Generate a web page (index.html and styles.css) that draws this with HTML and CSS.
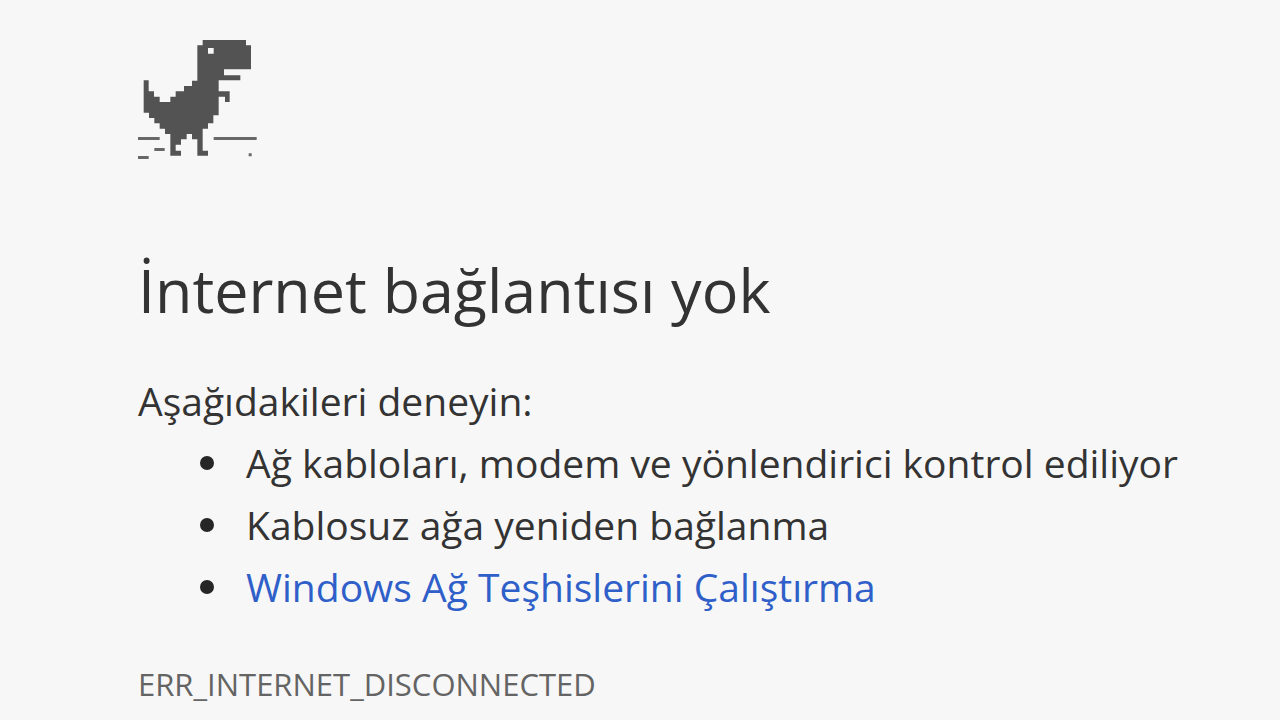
FILE: index.html
```html
<!DOCTYPE html>
<html lang="tr">
<head>
<meta charset="utf-8">
<meta name="viewport" content="width=device-width, initial-scale=1">
<title>İnternet bağlantısı yok</title>
<link rel="stylesheet" href="styles.css">
</head>
<body>
<main class="page">
<svg class="dino" viewBox="24 30 360 360" aria-hidden="true">
<path class="dino-body" fill-rule="evenodd" d="M218 30H348V46H363V118H282V136H331V151H266V184H299V216H285V200H266V256H250V280H234V296H218V362H234V377H202V328H186V312H170V328H153V344H137V362H153V377H121V312H105V296H89V280H73V264H57V248H41V151H56V184H72V200H89V216H121V200H137V184H162V168H186V152H202V46H218ZM234 54V71H251V54Z"/>
<path class="dino-ground" d="M24 321H89V330H24ZM73 354H104V363H73ZM24 378H56V387H24ZM251 321H380V330H251ZM356 370H365V379H356Z"/>
</svg>
<h1 class="title">İnternet bağlantısı yok</h1>
<p class="intro">Aşağıdakileri deneyin:</p>
<ul class="tips">
<li class="tip">Ağ kabloları, modem ve yönlendirici kontrol ediliyor</li>
<li class="tip">Kablosuz ağa yeniden bağlanma</li>
<li class="tip"><a class="link" href="#">Windows Ağ Teşhislerini Çalıştırma</a></li>
</ul>
<p class="code">ERR_INTERNET_DISCONNECTED</p>
</main>
</body>
</html>
```

FILE: styles.css
```css
body {
  margin: 0;
  background: #f7f7f7;
  color: #333;
  font-family: "Open Sans", "Noto Sans", sans-serif;
}

.page {
  padding: 40px 32px 0 138px;
}

.dino {
  display: block;
  width: 120px;
  height: 120px;
}

.dino-body {
  fill: #535353;
}

.dino-ground {
  fill: #686868;
}

.title {
  margin: 88px 0 0;
  font-size: 61px;
  line-height: 84px;
  font-weight: 400;
}

.intro {
  margin: 38px 0 0;
  font-size: 39px;
  line-height: 62px;
}

.tips {
  margin: 0;
  padding: 0 0 0 62px;
  font-size: 39px;
  line-height: 62px;
  list-style: none;
}

.tip {
  display: flex;
  align-items: center;
  gap: 32px;
}

.tip::before {
  content: "";
  flex: none;
  width: 14px;
  height: 14px;
  border-radius: 50%;
  background: #262626;
}

.link {
  color: #2f5fc9;
  text-decoration: none;
}

.code {
  margin: 42px 0 0;
  font-size: 31px;
  line-height: 48px;
  color: #646464;
}
```
